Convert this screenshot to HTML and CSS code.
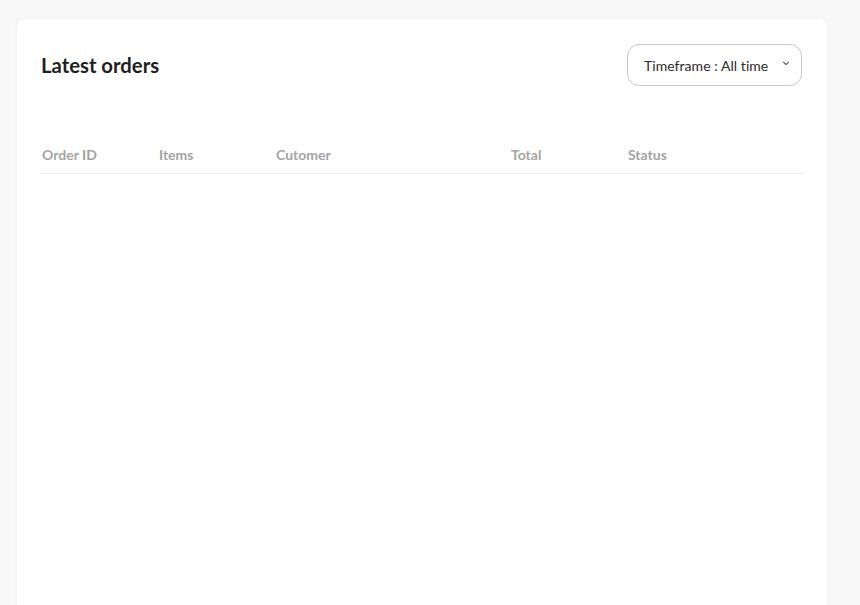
FILE: index.html
```html
<!DOCTYPE html>
<html>
<head>
<meta charset="utf-8">
<link rel="stylesheet" href="styles.css">
</head>
<body>
<div class="card">
  <div class="card-head">
    <h2 class="title">Latest orders</h2>
    <div class="select">
      <span>Timeframe : All time</span>
      <svg class="chev" width="8" height="5" viewBox="0 0 8 5"><path d="M1.5 1.2 L4 3.6 L6.5 1.2" fill="none" stroke="#555" stroke-width="1.1" stroke-linecap="round" stroke-linejoin="round"/></svg>
    </div>
  </div>
  <table class="orders">
    <thead>
      <tr>
        <th class="c-id">Order ID</th>
        <th class="c-items">Items</th>
        <th class="c-cust">Cutomer</th>
        <th class="c-total">Total</th>
        <th class="c-status">Status</th>
      </tr>
    </thead>
  </table>
</div>
</body>
</html>
```

FILE: styles.css
```css
html, body {
  margin: 0;
  padding: 0;
  background: #f8f8f8;
  font-family: "Lato", "Liberation Sans", sans-serif;
  overflow: hidden;
}
.card {
  margin: 19px 0 0 17px;
  width: 810px;
  height: 640px;
  box-sizing: border-box;
  background: #fff;
  border-radius: 8px;
  box-shadow: 0 0 4px rgba(0,0,0,0.05);
  padding: 25px 24px 0 24px;
}
.card-head {
  display: flex;
  justify-content: space-between;
  align-items: center;
  height: 42px;
}
.title {
  margin: -1px 0 0 0;
  font-size: 20.3px;
  font-weight: 700;
  color: #1f1f1f;
}
.select {
  width: 175px;
  height: 42px;
  box-sizing: border-box;
  border: 1px solid #c8c8c8;
  border-radius: 12px;
  display: flex;
  align-items: center;
  justify-content: space-between;
  padding: 0 11px 0 16px;
  font-size: 14px;
  letter-spacing: 0.05px;
  color: #2a2a2a;
  margin-right: 1px;
}
.chev { margin-top: -4px; }
.orders {
  margin-top: 52px;
  width: 762px;
  border-collapse: collapse;
  table-layout: fixed;
}
.orders th {
  text-align: left;
  font-size: 14px;
  font-weight: 700;
  color: #a3a3a3;
  height: 33px;
  padding: 0 0 2px 0;
  text-indent: 1px;
  border-bottom: 1px solid #ededed;
}
.c-id, .c-items, .c-total { width: 117px; }
.c-cust { width: 235px; }
```
